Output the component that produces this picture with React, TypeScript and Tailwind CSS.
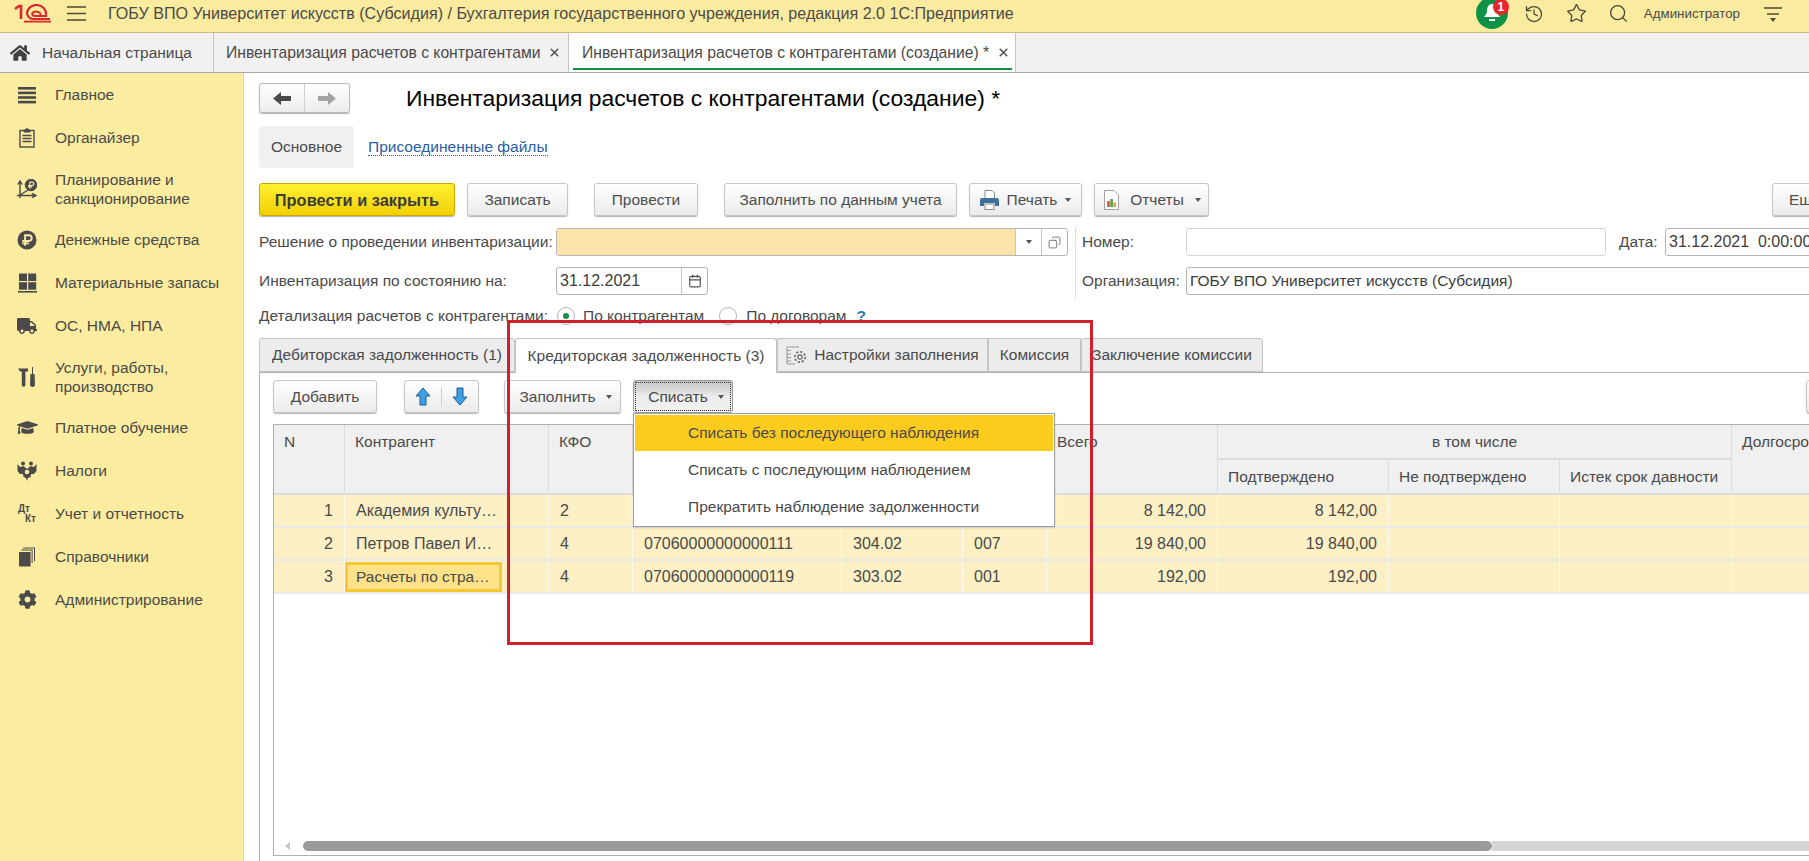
import React from 'react';
import { X, Search, Star, History, Calendar, Copy } from 'lucide-react';
import { FaHome, FaTruck, FaGraduationCap, FaCog } from 'react-icons/fa';

const Logo1C = () => (
  <svg width="37" height="19" viewBox="0 0 37 19" fill="none" stroke="#d7282f">
    <path d="M1 5 L5 2 H7 V15" strokeWidth="2.6" />
    <path d="M32 11 A9 8.5 0 0 0 13 9 A6.5 6.5 0 0 0 19 15 H36" strokeWidth="2.2" />
    <path d="M27 11 A5 4.5 0 0 0 18 9.5 A3 3 0 0 0 21 12 H33" strokeWidth="1.8" />
    <path d="M10 17.6 H37" strokeWidth="1.8" />
  </svg>
);

const Caret = () => <span className="inline-block h-0 w-0 border-x-[3px] border-t-[4px] border-x-transparent border-t-[#555]" />;

const RubleMark = ({ x, y, r }: { x: number; y: number; r: number }) => (
  <g>
    <circle cx={x} cy={y} r={r} fill="#4a4a4a" />
    <path
      d={`M${x - r * 0.2} ${y + r * 0.6} V${y - r * 0.5} H${x + r * 0.2} A${r * 0.28} ${r * 0.28} 0 0 1 ${x + r * 0.2} ${y + r * 0.1} H${x - r * 0.5} M${x - r * 0.5} ${y + r * 0.35} H${x + r * 0.2}`}
      fill="none"
      stroke="#fbeb9f"
      strokeWidth={r * 0.2}
    />
  </g>
);

const IconMenu = () => (
  <svg width="18" height="18" viewBox="0 0 18 18" fill="#4a4a4a">
    <rect y="1" width="18" height="2.6" />
    <rect y="5.6" width="18" height="2.6" />
    <rect y="10.2" width="18" height="2.6" />
    <rect y="14.8" width="18" height="2.6" />
  </svg>
);

const IconOrganizer = () => (
  <svg width="16" height="20" viewBox="0 0 16 20" fill="none" stroke="#4a4a4a">
    <rect x="1" y="2.5" width="14" height="16.5" strokeWidth="1.4" />
    <path d="M5 2.5 L8 0.5 L11 2.5 V4 H5 Z" fill="#4a4a4a" />
    <path d="M3.5 7.5 H12.5 M3.5 10.5 H12.5 M3.5 13.5 H12.5" strokeWidth="1.3" />
  </svg>
);

const IconPlan = () => (
  <svg width="20" height="20" viewBox="0 0 20 20" fill="none" stroke="#4a4a4a">
    <path d="M3 19 V3 M0.8 5.5 L3 2 L5.2 5.5 M0 16.5 H18 M15 14.3 L19 16.5 L15 18.7 M3 16 L11 11" strokeWidth="1.4" />
    <RubleMark x={14} y={6} r={5.8} />
  </svg>
);

const IconMoney = () => (
  <svg width="20" height="20" viewBox="0 0 20 20">
    <RubleMark x={10} y={10} r={9.5} />
  </svg>
);

const IconGrid = () => (
  <svg width="19" height="20" viewBox="0 0 19 20" fill="#4a4a4a">
    <rect x="1" y="0.5" width="8" height="7.5" />
    <rect x="10.2" y="0.5" width="8" height="7.5" />
    <rect x="1" y="9.2" width="8" height="7.5" />
    <rect x="10.2" y="9.2" width="8" height="7.5" />
    <rect y="18" width="19" height="1.6" />
  </svg>
);

const IconTools = () => (
  <svg width="20" height="20" viewBox="0 0 20 20" fill="#4a4a4a">
    <path d="M1 1.5 H11 V4.5 H8.4 V18 A1.8 1.8 0 0 1 4.8 18 V4.5 H3 Z" />
    <path d="M15 0 H16 V7 H17.6 V9 L18 18 A2.5 2 0 0 1 13 18 L13.4 9 V7 H15 Z" />
  </svg>
);

const IconEagle = () => (
  <svg width="20" height="20" viewBox="0 0 20 20" fill="#4a4a4a">
    <circle cx="6" cy="2.5" r="2" />
    <circle cx="14" cy="2.5" r="2" />
    <path d="M0.5 3 L3 6 L6.5 5 L10 8 L13.5 5 L17 6 L19.5 3 V10 L17 13 L14 13 L13.5 16 L11 17 L10 20 L9 17 L6.5 16 L6 13 L3 13 L0.5 10 Z" />
    <circle cx="10" cy="11" r="2.3" fill="#fbeb9f" />
  </svg>
);

const IconDtKt = () => (
  <div className="flex h-5 w-[18px] flex-col text-[10px] leading-[10px] font-bold text-[#4a4a4a]">
    <span>Дт</span>
    <span className="self-end">Кт</span>
  </div>
);

const IconBooks = () => (
  <svg width="16" height="20" viewBox="0 0 16 20" fill="#4a4a4a">
    <path d="M4 0.5 H16 V14 H15 V1.5 H4 Z" />
    <path d="M2.2 2.6 H13.6 V16 H12.6 V3.6 H2.2 Z" />
    <rect y="5" width="11.6" height="14.5" rx="0.8" />
  </svg>
);

const menu: { label: string[]; icon: React.ReactNode }[] = [
  { label: ['Главное'], icon: <IconMenu /> },
  { label: ['Органайзер'], icon: <IconOrganizer /> },
  { label: ['Планирование и', 'санкционирование'], icon: <IconPlan /> },
  { label: ['Денежные средства'], icon: <IconMoney /> },
  { label: ['Материальные запасы'], icon: <IconGrid /> },
  { label: ['ОС, НМА, НПА'], icon: <FaTruck size={20} color="#4a4a4a" /> },
  { label: ['Услуги, работы,', 'производство'], icon: <IconTools /> },
  { label: ['Платное обучение'], icon: <FaGraduationCap size={21} color="#4a4a4a" /> },
  { label: ['Налоги'], icon: <IconEagle /> },
  { label: ['Учет и отчетность'], icon: <IconDtKt /> },
  { label: ['Справочники'], icon: <IconBooks /> },
  { label: ['Администрирование'], icon: <FaCog size={19} color="#4a4a4a" /> },
];

const Btn = ({ className, children }: { className: string; children: React.ReactNode }) => (
  <div className={`flex h-[33px] shrink-0 items-center justify-center rounded-[3px] border border-[#c6c6c6] bg-linear-to-b from-white to-[#ebebeb] text-[#4d4d4d] shadow-[0_1px_1px_rgba(0,0,0,0.3)] ${className}`}>
    {children}
  </div>
);

const IconPrinter = () => (
  <svg width="19" height="20" viewBox="0 0 19 20">
    <path d="M5 0.5 H12 L14.5 3 V9 H5 Z" fill="#fff" stroke="#8a8a8a" />
    <path d="M2 8 H17 A2 2 0 0 1 19 10 V16 H15 V13 H4 V16 H0 V10 A2 2 0 0 1 2 8 Z" fill="#3f6f9c" />
    <rect x="5" y="14" width="9" height="5.5" fill="#fff" stroke="#8a8a8a" />
  </svg>
);

const IconReport = () => (
  <svg width="15" height="20" viewBox="0 0 15 20">
    <path d="M0.5 0.5 H10 L14.5 5 V19.5 H0.5 Z" fill="#fff" stroke="#a0a0a0" />
    <rect x="3.2" y="11" width="2.6" height="6" fill="#d9503f" />
    <rect x="6.3" y="9" width="2.6" height="8" fill="#54a24a" />
    <rect x="9.4" y="12.5" width="2.6" height="4.5" fill="#d9a03f" />
  </svg>
);

const IconSettingsDoc = () => (
  <svg width="22" height="19" viewBox="0 0 22 19" fill="none" stroke="#9a9a9a">
    <path d="M1 1 H13 M1 4.5 H5 M1 8 H5 M1 11.5 H5 M1 15 H5 M1 1 V18 H9" strokeWidth="1" />
    <circle cx="14" cy="11" r="2.2" strokeWidth="1.2" stroke="#6a6a6a" />
    <circle cx="14" cy="11" r="5.2" strokeWidth="1.6" strokeDasharray="2.2 1.8" stroke="#6a6a6a" />
  </svg>
);

const Arrow = ({ down }: { down?: boolean }) => (
  <svg width="16" height="19" viewBox="0 0 16 19" className={down ? 'rotate-180' : ''}>
    <path d="M8 1 L15 9 H11 V18 H5 V9 H1 Z" fill="#3f9fe4" stroke="#1c5f92" strokeWidth="1" />
  </svg>
);

const NavArrow = ({ color, flip }: { color: string; flip?: boolean }) => (
  <svg width="18" height="13" viewBox="0 0 18 13" className={flip ? 'rotate-180' : ''}>
    <path d="M0 6.5 L8 0 V4 H18 V9 H8 V13 Z" fill={color} />
  </svg>
);

const cols = 'grid grid-cols-[71px_204px_84px_209px_121px_84px_171px_171px_171px_172px_200px]';
const cellLine = 'border-r border-[#fffaf0]';

const rows = [
  { n: '1', name: 'Академия культу…', kfo: '2', code: '', acc: '', kps: '', sum: '8 142,00', ok: '8 142,00' },
  { n: '2', name: 'Петров Павел И…', kfo: '4', code: '07060000000000111', acc: '304.02', kps: '007', sum: '19 840,00', ok: '19 840,00' },
  { n: '3', name: 'Расчеты по стра…', kfo: '4', code: '07060000000000119', acc: '303.02', kps: '001', sum: '192,00', ok: '192,00' },
];

const Cell = ({ className, children }: { className?: string; children?: React.ReactNode }) => (
  <div className={`flex h-[31px] items-center truncate bg-[#fdf0c4] px-[11px] text-[16px] ${cellLine} ${className ?? ''}`}>{children}</div>
);

const Head = ({ className, children }: { className?: string; children?: React.ReactNode }) => (
  <div className={`border-r border-b-2 border-[#dcdcdc] bg-[#f0f0f0] px-[10px] pt-[8px] ${className ?? ''}`}>{children}</div>
);

export default function App() {
  return (
    <div className="relative flex h-screen flex-col overflow-hidden bg-white font-['Liberation_Sans',Arial,sans-serif] text-[15.5px] leading-[18px] text-[#4a4a4a]">
      {/* шапка */}
      <header className="flex h-[33px] shrink-0 items-center border-b border-[#c9bd80] bg-[#fbeb9f]">
        <div className="ml-[14px] pb-[5px]"><Logo1C /></div>
        <div className="ml-[16px] pb-[5px]"><svg width="19" height="15" viewBox="0 0 19 15" stroke="#4a4a3a" strokeWidth="1.5"><path d="M0 1 H19 M0 7.5 H19 M0 14 H19" /></svg></div>
        <div className="ml-[22px] pb-[6px] text-[16.1px]">ГОБУ ВПО Университет искусств (Субсидия) / Бухгалтерия государственного учреждения, редакция 2.0 1С:Предприятие</div>
        <div className="ml-auto flex items-center pb-[5px]">
          <div className="relative mr-[16px] h-[32px] w-[32px]">
            <div className="absolute top-[-1px] left-0 flex h-[32px] w-[32px] items-center justify-center rounded-full bg-[#0f9247]">
              <svg width="16" height="18" viewBox="0 0 16 18" fill="#fff"><path d="M8 0 C4 0 3 4 3 7 C3 10 1 11 0 13 H16 C15 11 13 10 13 7 C13 4 12 0 8 0 Z" /><rect x="5" y="15" width="6" height="2" /></svg>
            </div>
            <div className="absolute top-[1px] left-[17px] flex h-[16px] w-[16px] items-center justify-center rounded-full bg-[#e8262c] text-[12px] leading-[14px] font-bold text-white">1</div>
          </div>
          <History size={20} strokeWidth={1.5} color="#4a4a3a" className="mr-[22px]" />
          <Star size={21} strokeWidth={1.5} color="#4a4a3a" className="mr-[21px]" />
          <Search size={21} strokeWidth={1.5} color="#4a4a3a" className="mr-[15px]" />
          <span className="text-[13.33px]">Администратор</span>
          <div className="mr-[27px] ml-[24px] flex flex-col items-center">
            <svg width="18" height="16" viewBox="0 0 18 16" stroke="#4a4a3a" strokeWidth="1.3"><path d="M0 2 H18 M3 8 H15" /><path d="M6 12 H12 L9 16 Z" fill="#4a4a3a" stroke="none" /></svg>
          </div>
        </div>
      </header>

      {/* вкладки окон */}
      <nav className="flex h-[40px] shrink-0 border-b border-[#a8a8a8] bg-[#f1f1f1]">
        <div className="flex w-[214px] items-center border-r border-[#c4c4c4] pl-[10px]">
          <FaHome size={20} color="#404040" />
          <span className="ml-[12px]">Начальная страница</span>
        </div>
        <div className="flex w-[355px] items-center border-r border-[#c4c4c4] pl-[12px] text-[15.7px]">
          <span>Инвентаризация расчетов с контрагентами</span>
          <X size={13} strokeWidth={3} color="#555" className="ml-[8px]" />
        </div>
        <div className="relative flex w-[447px] items-center border-r border-[#c4c4c4] bg-white pl-[13px] text-[15.7px]">
          <span>Инвентаризация расчетов с контрагентами (создание) *</span>
          <X size={13} strokeWidth={3} color="#555" className="ml-[8px]" />
          <div className="absolute right-[3px] bottom-[2px] left-[4px] h-[2px] bg-[#0f9247]" />
        </div>
      </nav>

      <div className="flex min-h-0 flex-1">
        {/* панель разделов */}
        <aside className="w-[244px] shrink-0 border-r border-[#e3d68e] bg-[#fcec9f]">
          {menu.map((item) => (
            <div key={item.label[0]} className={`flex items-center ${item.label.length > 1 ? 'h-[59px]' : 'h-[43px]'}`}>
              <div className="flex w-[55px] justify-center pr-[1px]">{item.icon}</div>
              <div>{item.label.map((l) => <div key={l} className="leading-[19px]">{l}</div>)}</div>
            </div>
          ))}
        </aside>

        {/* форма документа */}
        <main className="flex min-w-0 flex-1 flex-col overflow-hidden pl-[15px]">
          <div className="mt-[10px] flex h-[30px] items-center">
            <div className="flex h-[30px] w-[91px] rounded-[3px] border border-[#b9b9b9] bg-linear-to-b from-white to-[#ececec] shadow-[0_1px_1px_rgba(0,0,0,0.3)]">
              <div className="flex w-[45px] items-center justify-center border-r border-[#cfcfcf]"><NavArrow color="#4a4a4a" /></div>
              <div className="flex flex-1 items-center justify-center"><NavArrow color="#a3a3a3" flip /></div>
            </div>
            <h1 className="ml-[56px] text-[22.9px] leading-[26px] text-black">Инвентаризация расчетов с контрагентами (создание) *</h1>
          </div>

          <div className="mt-[13px] flex h-[42px] items-center">
            <div className="flex h-[42px] w-[95px] items-center justify-center rounded-[3px] bg-[#f0f0f0]">Основное</div>
            <a className="ml-[14px] border-b border-dotted border-[#2a5da8] leading-[17px] text-[#2a5da8]">Присоединенные файлы</a>
          </div>

          <div className="mt-[15px] flex h-[33px]">
            <div className="flex h-[33px] w-[196px] shrink-0 items-center justify-center rounded-[3px] border border-[#c9a900] bg-linear-to-b from-[#fff02e] to-[#f2d000] text-[16.4px] font-bold text-[#3c3c3c] shadow-[0_1px_1px_rgba(0,0,0,0.3)]">Провести и закрыть</div>
            <Btn className="ml-[12px] w-[101px]">Записать</Btn>
            <Btn className="ml-[26px] w-[104px]">Провести</Btn>
            <Btn className="ml-[26px] w-[233px]">Заполнить по данным учета</Btn>
            <Btn className="ml-[12px] w-[113px] gap-[8px]"><IconPrinter />Печать<Caret /></Btn>
            <Btn className="ml-[12px] w-[115px] gap-[11px] pl-[2px]"><IconReport />Отчеты<Caret /></Btn>
            <Btn className="ml-[563px] w-[60px] justify-start pl-[16px]">Еще</Btn>
          </div>

          <div className="mt-[12px] flex">
            <div className="w-[816px] shrink-0">
              <div className="flex h-[28px] items-center">
                <span className="w-[297px] shrink-0">Решение о проведении инвентаризации:</span>
                <div className="flex h-[28px] w-[512px] overflow-hidden rounded-[3px] border border-[#b5b5b5]">
                  <div className="flex-1 bg-[#fce3a9]" />
                  <div className="flex w-[26px] items-center justify-center border-l border-[#c4c4c4]"><Caret /></div>
                  <div className="flex w-[26px] items-center justify-center border-l border-[#c4c4c4]"><Copy size={13} strokeWidth={1.4} color="#555" className="-scale-x-100" /></div>
                </div>
              </div>
              <div className="mt-[11px] flex h-[28px] items-center">
                <span className="w-[297px] shrink-0">Инвентаризация по состоянию на:</span>
                <div className="flex h-[28px] w-[152px] items-center rounded-[3px] border border-[#b5b5b5]">
                  <span className="flex-1 pl-[3px] text-[16px] text-[#3c3c3c]">31.12.2021</span>
                  <div className="flex h-full w-[26px] items-center justify-center border-l border-[#c4c4c4]"><Calendar size={14} strokeWidth={2} color="#555" /></div>
                </div>
              </div>
              <div className="mt-[10px] flex h-[22px] items-center">
                <span className="w-[298px] shrink-0">Детализация расчетов с контрагентами:</span>
                <div className="flex h-[18px] w-[18px] items-center justify-center rounded-full border border-[#b5b5b5]"><div className="h-[6px] w-[6px] rounded-full bg-[#0f9247]" /></div>
                <span className="ml-[8px]">По контрагентам</span>
                <div className="ml-[15px] h-[18px] w-[18px] rounded-full border border-[#b5b5b5]" />
                <span className="ml-[9px]">По договорам</span>
                <span className="ml-[10px] font-bold text-[#2a7ab8]">?</span>
              </div>
            </div>
            <div className="h-[72px] min-w-0 flex-1 border-l border-dotted border-[#c9c9c9] pl-[6px]">
              <div className="flex h-[28px] items-center">
                <span className="w-[104px] shrink-0">Номер:</span>
                <div className="h-[28px] w-[420px] shrink-0 rounded-[3px] border border-[#d5d5d5]" />
                <span className="ml-[13px] w-[46px] shrink-0">Дата:</span>
                <div className="flex h-[28px] w-[200px] shrink-0 items-center rounded-[3px] border border-[#b5b5b5] pl-[3px] text-[16px] whitespace-pre text-[#3c3c3c]">31.12.2021  0:00:00</div>
              </div>
              <div className="mt-[11px] flex h-[28px] items-center">
                <span className="w-[104px] shrink-0">Организация:</span>
                <div className="flex h-[28px] w-[700px] shrink-0 items-center rounded-[3px] border border-[#b5b5b5] pl-[3px] text-[#3c3c3c]">ГОБУ ВПО Университет искусств (Субсидия)</div>
              </div>
            </div>
          </div>

          {/* вкладки формы */}
          <div className="relative z-10 mt-[11px] flex h-[35px] shrink-0 border-b border-[#b0b0b0]">
            <div className="flex h-[34px] w-[256px] items-center justify-center rounded-t-[3px] border border-[#c4c4c4] bg-[#ececec]">Дебиторская задолженность (1)</div>
            <div className="flex h-[35px] w-[262px] items-center justify-center rounded-t-[3px] border-x border-t border-[#c4c4c4] bg-white">Кредиторская задолженность (3)</div>
            <div className="flex h-[34px] w-[211px] items-center justify-center gap-[6px] border border-[#c4c4c4] bg-[#ececec]"><IconSettingsDoc />Настройки заполнения</div>
            <div className="flex h-[34px] w-[93px] items-center justify-center border border-[#c4c4c4] bg-[#ececec]">Комиссия</div>
            <div className="flex h-[34px] w-[182px] items-center justify-center rounded-t-[3px] border border-[#c4c4c4] bg-[#ececec]">Заключение комиссии</div>
          </div>

          <div className="flex min-h-0 flex-1 flex-col border-l border-[#b0b0b0] pb-[5px] pl-[13px]">
            <div className="mt-[7px] flex h-[33px] shrink-0">
              <Btn className="w-[104px]">Добавить</Btn>
              <Btn className="ml-[27px] w-[75px]">
                <div className="flex flex-1 items-center justify-center border-r border-[#cfcfcf]"><Arrow /></div>
                <div className="flex flex-1 items-center justify-center"><Arrow down /></div>
              </Btn>
              <Btn className="ml-[25px] w-[117px] gap-[10px] pl-[6px]">Заполнить<Caret /></Btn>
              <div className="relative z-20 ml-[12px] h-[33px] w-[100px] shrink-0">
                <div className="flex h-[33px] items-center justify-center gap-[10px] rounded-[3px] border border-[#9c9c9c] bg-linear-to-b from-[#c4c4c4] via-[#ececec] to-[#f2f2f2] pl-[6px] outline-1 -outline-offset-3 outline-[#333] outline-dotted">Списать<Caret /></div>
                <div className="absolute top-[33px] left-0 h-[114px] w-[422px] border border-[#a0a0a0] bg-white p-[1px] shadow-[0_1px_2px_rgba(0,0,0,0.15)]">
                  <div className="flex h-[36px] items-center bg-[#fbcb1e] pl-[53px]">Списать без последующего наблюдения</div>
                  <div className="flex h-[37px] items-center pl-[53px]">Списать с последующим наблюдением</div>
                  <div className="flex h-[37px] items-center pl-[53px]">Прекратить наблюдение задолженности</div>
                </div>
              </div>
              <Btn className="ml-[1073px] w-[60px]">&nbsp;</Btn>
            </div>

            {/* табличная часть */}
            <div className="mt-[11px] flex min-h-0 flex-1 flex-col border-y border-l border-[#b0b0b0]">
              <div className={`${cols} h-[70px] w-max shrink-0 grid-rows-[35px_35px]`}>
                <Head className="row-span-2">N</Head>
                <Head className="row-span-2">Контрагент</Head>
                <Head className="row-span-2">КФО</Head>
                <Head className="row-span-2" />
                <Head className="row-span-2" />
                <Head className="row-span-2" />
                <Head className="row-span-2">Всего</Head>
                <Head className="col-span-3 text-center">в том числе</Head>
                <Head className="row-span-2">Долгосрочная</Head>
                <Head>Подтверждено</Head>
                <Head>Не подтверждено</Head>
                <Head>Истек срок давности</Head>
              </div>
              {rows.map((r) => (
                <div key={r.n} className={`${cols} h-[33px] w-max shrink-0 border-b-2 border-[#e9e9e9]`}>
                  <Cell className="justify-end border-[#d5d5d5]">{r.n}</Cell>
                  {r.n === '3' ? (
                    <div className={`flex h-[31px] items-center bg-[#fdf0c4] ${cellLine}`}>
                      <div className="flex h-[30px] w-[157px] items-center border-[3px] border-[#f5c92f] bg-[#fde28a] pl-[8px]">{r.name}</div>
                    </div>
                  ) : (
                    <Cell className="text-[15.5px]">{r.name}</Cell>
                  )}
                  <Cell>{r.kfo}</Cell>
                  <Cell>{r.code}</Cell>
                  <Cell>{r.acc}</Cell>
                  <Cell>{r.kps}</Cell>
                  <Cell className="justify-end">{r.sum}</Cell>
                  <Cell className="justify-end">{r.ok}</Cell>
                  <Cell />
                  <Cell />
                  <Cell />
                </div>
              ))}
              <div className="flex-1" />
              <div className="mb-[4px] flex h-[10px] shrink-0 items-center">
                <div className="ml-[11px] h-0 w-0 border-y-[4px] border-r-[5px] border-y-transparent border-r-[#c4c4c4]" />
                <div className="ml-[13px] h-[10px] w-[1189px] rounded-full bg-[#9b9b9b]" />
                <div className="h-[10px] flex-1 bg-[#d5d5d5]" />
              </div>
            </div>
          </div>
        </main>
      </div>

      {/* пометка красной рамкой поверх скриншота */}
      <div className="pointer-events-none absolute top-[320px] left-[507px] z-30 h-[325px] w-[586px] border-[3px] border-[#d0202e]" />
    </div>
  );
}
